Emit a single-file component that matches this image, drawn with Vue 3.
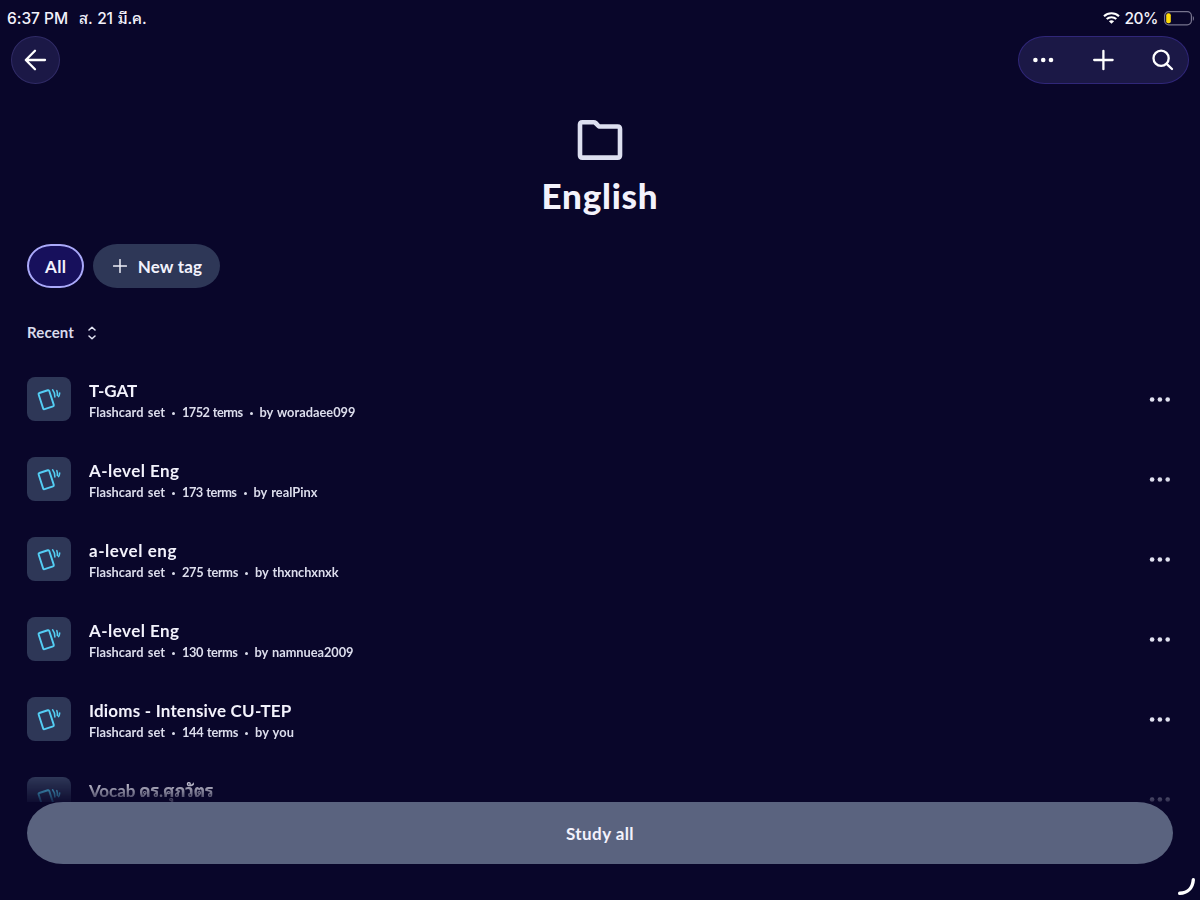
<script setup>
const sets = [
  { title: 'T-GAT', terms: '1752 terms', author: 'by woradaee099', tw: 48, mw: 60.5, aw: 96 },
  { title: 'A-level Eng', terms: '173 terms', author: 'by realPinx', tw: 90.5, mw: 54.5, aw: 64 },
  { title: 'a-level eng', terms: '275 terms', author: 'by thxnchxnxk', tw: 88, mw: 56, aw: 83.5 },
  { title: 'A-level Eng', terms: '130 terms', author: 'by namnuea2009', tw: 90.5, mw: 55.5, aw: 99 },
  { title: 'Idioms - Intensive CU-TEP', terms: '144 terms', author: 'by you', tw: 202.5, mw: 56, aw: 39 },
  { title: 'Vocab ดร.ศุภวัตร', terms: '', author: '', tw: 124.5, mw: 0, aw: 0 },
]

// Spreads the letters of a label so that it fills the given width.
const vFit = {
  mounted(el, { value }) {
    if (!value) return
    const width = el.getBoundingClientRect().width
    const count = [...el.textContent.trim()].filter((c) => !/\p{Mn}/u.test(c)).length
    el.style.letterSpacing = `${(value - width) / count}px`
  },
}
</script>

<template>
  <main class="screen">
    <div class="status">
      <span v-fit="61" class="clock">6:37 PM</span>
      <span v-fit="67.5" class="date">ส. 21 มี.ค.</span>
      <svg class="wifi" width="17" height="12" viewBox="0 0 17 12" fill="none" stroke="#fff" stroke-width="2.1">
        <path d="M1 4.2C5.1.3 11.9.3 16 4.2M3.7 7.1c2.7-2.5 6.9-2.5 9.6 0" />
        <path d="M8.5 11.7 5.9 9.2c1.5-1.2 3.7-1.2 5.2 0Z" fill="#fff" stroke="none" />
      </svg>
      <span v-fit="33.5" class="percent">20%</span>
      <svg class="battery" width="30" height="15" viewBox="0 0 30 15">
        <rect x=".6" y=".6" width="26.8" height="13.3" rx="4.2" fill="none" stroke="#77748e" stroke-width="1.2" />
        <rect x="2.2" y="2.3" width="4.6" height="9.9" rx="2" fill="#ffdb0a" />
        <path d="M28.8 5.1c1.5.7 1.5 4 0 4.7Z" fill="#77748e" />
      </svg>
    </div>

    <header class="toolbar">
      <button class="back" aria-label="Back">
        <svg width="48" height="48" viewBox="0 0 48 48"><path d="M34 24H15.5M24 14.7 14.8 24l9.2 9.3" /></svg>
      </button>
      <div class="actions">
        <svg width="50" height="48" viewBox="0 0 50 48"><g class="dots"><circle cx="16.4" cy="24" r="2.3" /><circle cx="24.2" cy="24" r="2.3" /><circle cx="32" cy="24" r="2.3" /></g></svg>
        <svg width="50" height="48" viewBox="0 0 50 48"><path d="M24.4 14.8v18.4M15.2 24h18.4" /></svg>
        <svg width="50" height="48" viewBox="0 0 50 48"><circle cx="23.1" cy="22.3" r="7.6" /><path d="m28.6 27.8 5.4 5.2" /></svg>
      </div>
    </header>

    <section class="hero">
      <svg width="46" height="42" viewBox="0 0 46 42"><path d="M3 5.6q0-2.4 2.4-2.4h11.2q1.2 0 2 .8l3.4 3.5h18.6q2.4 0 2.4 2.5v26.2q0 2.4-2.4 2.4H5.4Q3 38.6 3 36.2Z" /></svg>
      <h1><span v-fit="117">English</span></h1>
    </section>

    <div class="tags">
      <button class="tag selected"><span v-fit="21.5">All</span></button>
      <button class="tag">
        <svg width="14" height="14" viewBox="0 0 14 14"><path d="M7 .6v12.8M.6 7h12.8" /></svg>
        <span v-fit="64.5">New tag</span>
      </button>
    </div>

    <div class="sort">
      <span v-fit="47">Recent</span>
      <svg width="8" height="14" viewBox="0 0 8 14"><path d="M1 4 4 1.2 7 4M1 10l3 2.8L7 10" /></svg>
    </div>

    <ul class="sets">
      <li v-for="(set, i) in sets" :key="i" class="set">
        <div class="thumb">
          <svg width="44" height="44" viewBox="0 0 44 44">
            <rect x="13.6" y="14.2" width="11.2" height="17" rx="1.2" transform="rotate(-18 19.2 22.7)" />
            <path class="wave" d="M25.6 12.8q2.6 3.2 2.3 7.2M29.8 13.6q1 2.3.5 5M32.7 16q-.1 2-1.1 3.6" />
          </svg>
        </div>
        <div class="info">
          <h2><span v-fit="set.tw">{{ set.title }}</span></h2>
          <p v-if="set.terms">
            <span v-fit="76">Flashcard set</span><i></i><span v-fit="set.mw">{{ set.terms }}</span><i></i><span v-fit="set.aw">{{ set.author }}</span>
          </p>
        </div>
        <svg class="more" width="22" height="6" viewBox="0 0 22 6"><circle cx="3.1" cy="2.5" r="2.3" /><circle cx="10.9" cy="2.5" r="2.3" /><circle cx="18.7" cy="2.5" r="2.3" /></svg>
      </li>
    </ul>

    <button class="study"><span v-fit="68">Study all</span></button>
    <svg class="corner" width="20" height="20" viewBox="0 0 20 20"><path d="M17.3 3.8C16.7 12 11.4 16.9 3.7 17.3" /></svg>
  </main>
</template>

<style>
body { background: #09062a; }
</style>

<style scoped>
* { box-sizing: border-box; }
.screen {
  position: relative;
  width: 1200px;
  height: 900px;
  overflow: hidden;
  background: #09062a;
  color: #f3f2fc;
  font-family: Lato, "Noto Sans Thai Looped", Loma, Waree, Garuda, "Noto Sans", sans-serif;
  white-space: nowrap;
}
button { margin: 0; padding: 0; border: 0; color: inherit; font: inherit; }
svg { display: block; flex: none; }
span { display: inline-block; }
.status {
  display: flex;
  align-items: center;
  height: 36px;
  padding: 0 6px 0 7px;
  font: 500 15.5px/20px Inter, "Noto Sans Thai Looped", Loma, Waree, Garuda, sans-serif;
}
.status span { padding-top: 1px; }
.date { margin-left: 11px; word-spacing: 1px; }
.wifi { margin-left: auto; }
.percent { margin: 0 6px 0 4.5px; }
.toolbar { display: flex; justify-content: space-between; height: 48px; padding: 0 11px; }
.back, .actions { border: 1px solid #302b66; background: #1b1846; }
.back { width: 49px; height: 48px; border-radius: 50%; }
.back svg { margin: -1px; }
.actions { display: flex; justify-content: space-between; width: 171px; height: 48px; border-radius: 27px / 24px; border-color: #302779; }
.actions svg { margin-top: -1px; }
.toolbar svg { fill: none; stroke: #fff; stroke-width: 2.3; stroke-linecap: round; stroke-linejoin: round; }
.toolbar .dots { fill: #fff; stroke: none; }
.hero { display: flex; flex-direction: column; align-items: center; padding-top: 35px; height: 160px; }
.hero svg { fill: none; stroke: #dddff0; stroke-width: 4.6; stroke-linejoin: round; }
h1 { margin: 12px 0 0; font-size: 35px; font-weight: 900; line-height: 44px; }
.tags { display: flex; gap: 9px; padding-left: 27px; }
.tag {
  display: flex;
  align-items: center;
  justify-content: center;
  gap: 11px;
  width: 127px;
  height: 44px;
  border-radius: 24px / 22px;
  background: #2e3757;
  font-size: 17px;
  font-weight: 700;
}
.tag.selected { width: 57.4px; border: 2px solid #aaa9fa; background: #17105c; }
.tag svg { margin-left: 1px; fill: none; stroke: #edeef8; stroke-width: 1.5; stroke-linecap: round; }
.sort { display: flex; align-items: center; gap: 14px; height: 24px; margin: 32px 0 0 27px; color: #d9dbec; font-size: 15px; font-weight: 700; }
.sort svg { margin-top: 1px; fill: none; stroke: #e4e6f5; stroke-width: 1.5; stroke-linecap: round; stroke-linejoin: round; }
.sets {
  height: 443px;
  margin: 15px 0 0;
  padding: 0 29px 0 27px;
  overflow: hidden;
  list-style: none;
  mask-image: linear-gradient(#000 0 418px, transparent 448px);
}
.set { display: flex; height: 80px; padding-top: 18px; }
.thumb { width: 44px; height: 44px; border-radius: 8px; background: #2e3757; }
.thumb svg { fill: none; stroke: #54cef4; stroke-width: 1.9; stroke-linecap: round; }
.thumb .wave { stroke-width: 1.5; }
.info { margin-left: 18px; }
h2 { margin: 3px 0 0; font-size: 17px; font-weight: 700; line-height: 22px; }
p { display: flex; align-items: center; margin: 0; color: #dcddec; font-size: 12.8px; font-weight: 700; line-height: 20px; word-spacing: 1px; }
p i { width: 3px; height: 3px; margin: 2px 7px 0; border-radius: 50%; background: #dcddec; }
.more { margin: 20px 0 0 auto; fill: #e0e1ef; }
.study {
  position: absolute;
  left: 27px;
  top: 802px;
  width: 1146px;
  height: 62px;
  border-radius: 36px / 31px;
  background: #5a637f;
  font-size: 17px;
  font-weight: 700;
}
.corner { position: absolute; left: 1176px; top: 876px; fill: none; stroke: #fff; stroke-width: 3.4; stroke-linecap: round; }
</style>
